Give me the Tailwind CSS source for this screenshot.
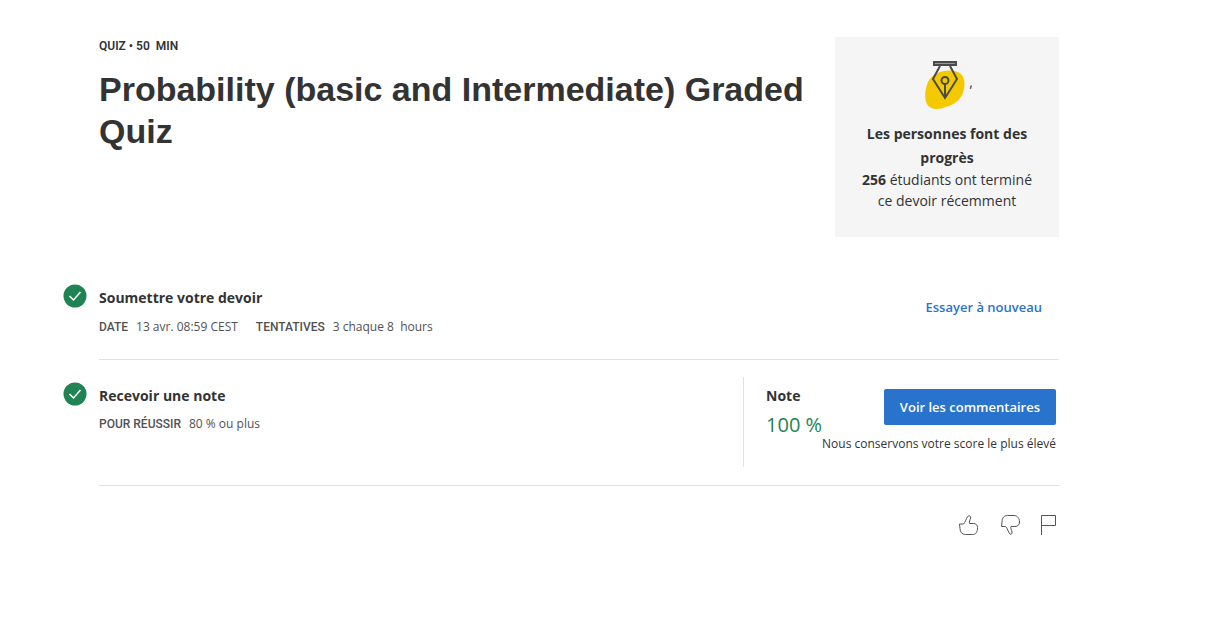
<!DOCTYPE html>
<html lang="fr">
<head>
<meta charset="utf-8">
<meta name="viewport" content="width=device-width, initial-scale=1">
<title>Probability (basic and Intermediate) Graded Quiz</title>
<script src="https://cdn.jsdelivr.net/npm/@tailwindcss/browser@4"></script>
</head>
<body class="bg-white font-['Open_Sans',sans-serif] text-sm text-[#333]">
<main class="pt-[37px] pr-[153px] pb-20 pl-[63px]">
  <header class="flex items-start justify-between pl-9">
    <div class="min-w-0 flex-1">
      <p class="font-['Roboto',sans-serif] text-xs leading-[18px] font-semibold">QUIZ • 50 &nbsp;MIN</p>
      <h1 class="mt-[13px] font-['Liberation_Sans',Arial,sans-serif] text-[34px] leading-[42px] font-bold">Probability (basic and Intermediate) Graded Quiz</h1>
    </div>
    <aside class="flex min-h-[200px] w-56 shrink-0 flex-col items-center bg-[#f5f5f5] px-6 pt-6 text-center">
      <div class="flex items-start gap-1 pl-1">
        <svg class="h-12 w-10" viewBox="0 0 40 48" fill="none" aria-hidden="true">
          <path d="M3 21C7 13 18 8 29 10C37 11 41 18 39 27C38 37 31 43 21 46C14 49 5 49 2 43C-1 37 0 28 3 21Z" fill="#f5c900"/>
          <g stroke="#4a4a4a" stroke-width="2">
            <path d="M9 1H31V4H9Z" fill="#999"/>
            <path d="M15 5L8 18L20 37L32 18L25 5M20 23V36"/>
            <circle cx="20" cy="19.500" r="3.500"/>
          </g>
        </svg>
        <span class="mt-[11px] leading-5">,</span>
      </div>
      <h2 class="mt-[13px] leading-6 font-bold">Les personnes font des progrès</h2>
      <p class="-mt-px leading-[21px]"><strong class="font-bold">256</strong> étudiants ont terminé ce devoir récemment</p>
    </aside>
  </header>

  <section class="mt-[47px] flex gap-3">
    <svg class="h-6 w-6 shrink-0" viewBox="0 0 24 24" fill="none" role="img" aria-label="Terminé"><circle cx="12" cy="12" r="11.500" fill="#1f8354"/><path d="M6.500 12L10.500 16L17.500 8" stroke="#fff" stroke-width="1.500"/></svg>
    <div class="flex min-h-[76px] flex-1 items-start justify-between border-b border-[#e1e1e1]">
      <div>
        <h2 class="mt-1 leading-5 font-bold">Soumettre votre devoir</h2>
        <dl class="mt-[9px] flex text-xs leading-5 text-[#525252]">
          <dt class="mr-2 font-['Roboto',sans-serif] font-medium">DATE</dt><dd class="mr-[18px]">13 avr. 08:59 CEST</dd>
          <dt class="mr-2 font-['Roboto',sans-serif] font-medium">TENTATIVES</dt><dd>3 chaque 8 &nbsp;hours</dd>
        </dl>
      </div>
      <a href="#" class="mt-[11px] mr-[17px] text-[13px] leading-6 font-semibold text-[#2a73cc]">Essayer à nouveau</a>
    </div>
  </section>

  <section class="mt-[17px] flex gap-3">
    <svg class="mt-[5px] h-6 w-6 shrink-0" viewBox="0 0 24 24" fill="none" role="img" aria-label="Terminé"><circle cx="12" cy="12" r="11.500" fill="#1f8354"/><path d="M6.500 12L10.500 16L17.500 8" stroke="#fff" stroke-width="1.500"/></svg>
    <div class="flex min-h-[109px] flex-1 items-start border-b border-[#e1e1e1]">
      <div class="flex-1">
        <h2 class="mt-[9px] leading-5 font-bold">Recevoir une note</h2>
        <dl class="mt-2 flex text-xs leading-5 text-[#525252]">
          <dt class="mr-2 font-['Roboto',sans-serif] font-medium">POUR RÉUSSIR</dt><dd>80 % ou plus</dd>
        </dl>
      </div>
      <div class="flex min-h-[90px] border-l border-[#e1e1e1] pr-[3px] pl-[22px]">
        <div class="mt-[9px]">
          <h2 class="leading-5 font-bold">Note</h2>
          <p class="mt-1 text-xl leading-[30px] whitespace-nowrap text-[#1f8354]">100 %</p>
        </div>
        <div class="mt-3 flex flex-col items-end">
          <button type="button" class="h-9 rounded-[2px] bg-[#2a73cc] px-4 text-[13px] font-semibold text-white">Voir les commentaires</button>
          <p class="mt-[9px] text-xs leading-5">Nous conservons votre score le plus élevé</p>
        </div>
      </div>
    </div>
  </section>

  <div class="mt-7 mr-[2px] flex justify-end">
    <button type="button" aria-label="J'aime" class="mr-5"><svg class="h-[22px] w-[22px]" viewBox="0 0 22 22" fill="none" stroke="#555" stroke-linejoin="round"><path d="M1.500 10H5.500C7 9 8 5 9.500 2.800C10.500 1 13 1.500 12.500 4C12.300 6 10.800 8 11.500 9.500H15.500C18 9.500 19.500 11 19.500 13.500C19.500 18 18 20.500 14.500 20.500H7.500C4 20.500 2 18 2 14.500Z"/></svg></button>
    <button type="button" aria-label="Je n'aime pas" class="mr-[18px]"><svg class="h-[22px] w-[22px]" viewBox="0 0 22 22" fill="none" stroke="#555" stroke-linejoin="round"><path d="M1.500 12.500L2 8C2 4 4 1.500 7.500 1.500H14C17.500 1.500 19.500 4.500 19.500 8C19.500 11 17.500 12.500 15 12.500H11C10 13.500 11.800 16 12 18C12.200 20 11 21 10 20C8 18 7.500 14 5.500 12.500Z"/></svg></button>
    <button type="button" aria-label="Signaler un problème"><svg class="h-[22px] w-[17px]" viewBox="0 0 17 22" fill="none" stroke="#555"><path d="M1.500 21V1.500H15.500V11.500H1.500"/></svg></button>
  </div>
</main>
</body>
</html>
